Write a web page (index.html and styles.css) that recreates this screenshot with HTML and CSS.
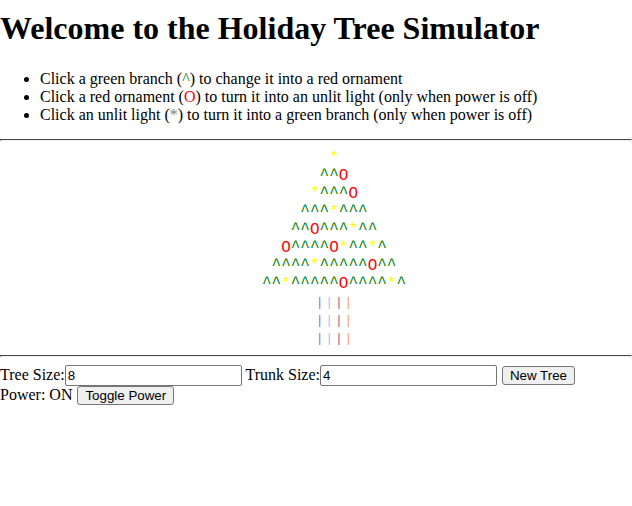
FILE: index.html
```html
<!DOCTYPE html>
<html>
<head>
<meta charset="utf-8">
<title>Holiday Tree Simulator</title>
<link rel="stylesheet" href="styles.css">
</head>
<body>
<h1 class="title">Welcome to the Holiday Tree Simulator</h1>
<ul class="rules">
  <li>Click a green branch (<span class="c-branch">^</span>) to change it into a red ornament</li>
  <li>Click a red ornament (<span class="c-orn">O</span>) to turn it into an unlit light (only when power is off)</li>
  <li>Click an unlit light (<span class="c-unlit">*</span>) to turn it into a green branch (only when power is off)</li>
</ul>
<hr class="rule">
<div class="tree">
  <div class="row"><span class="lt">*</span></div>
  <div class="row"><span class="br">^</span><span class="br">^</span><span class="or">O</span></div>
  <div class="row"><span class="lt">*</span><span class="br">^</span><span class="br">^</span><span class="br">^</span><span class="or">O</span></div>
  <div class="row"><span class="br">^</span><span class="br">^</span><span class="br">^</span><span class="lt">*</span><span class="br">^</span><span class="br">^</span><span class="br">^</span></div>
  <div class="row"><span class="br">^</span><span class="br">^</span><span class="or">O</span><span class="br">^</span><span class="br">^</span><span class="br">^</span><span class="lt">*</span><span class="br">^</span><span class="br">^</span></div>
  <div class="row"><span class="or">O</span><span class="br">^</span><span class="br">^</span><span class="br">^</span><span class="br">^</span><span class="or">O</span><span class="lt">*</span><span class="br">^</span><span class="br">^</span><span class="lt">*</span><span class="br">^</span></div>
  <div class="row"><span class="br">^</span><span class="br">^</span><span class="br">^</span><span class="br">^</span><span class="lt">*</span><span class="br">^</span><span class="br">^</span><span class="br">^</span><span class="br">^</span><span class="br">^</span><span class="or">O</span><span class="br">^</span><span class="br">^</span></div>
  <div class="row"><span class="br">^</span><span class="br">^</span><span class="lt">*</span><span class="br">^</span><span class="br">^</span><span class="br">^</span><span class="br">^</span><span class="br">^</span><span class="or">O</span><span class="br">^</span><span class="br">^</span><span class="br">^</span><span class="br">^</span><span class="lt">*</span><span class="br">^</span></div>
  <div class="row"><span class="tk t1">|</span><span class="tk t2">|</span><span class="tk t3">|</span><span class="tk t4">|</span></div>
  <div class="row"><span class="tk t1">|</span><span class="tk t2">|</span><span class="tk t3">|</span><span class="tk t4">|</span></div>
  <div class="row"><span class="tk t1">|</span><span class="tk t2">|</span><span class="tk t3">|</span><span class="tk t4">|</span></div>
</div>
<hr class="rule">
<div class="controls">Tree Size:<input class="field" type="text" value="8"> Trunk Size:<input class="field" type="text" value="4"> <button class="btn">New Tree</button></div>
<div class="controls">Power: ON <button class="btn">Toggle Power</button></div>
</body>
</html>
```

FILE: styles.css
```css
html, body {
  margin: 0;
  padding: 0;
  background: #fff;
}
body {
  font-family: "Liberation Serif", "Times New Roman", serif;
  font-size: 16px;
  color: #000;
}
.title {
  font-size: 32px;
  font-weight: bold;
  margin: 10px 0 23px;
}
.rules {
  margin: 16px 0 15px;
  padding-left: 40px;
}
.c-branch { color: green; }
.c-orn { color: red; }
.c-unlit { color: gray; }
.rule {
  margin: 8px 0;
  border: 1px inset #c0c0c0;
  border-color: #9a9a9a #eee #eee #9a9a9a;
  height: 0;
}
.tree {
  font-family: "Liberation Mono", "Courier New", monospace;
  font-size: 16px;
  text-align: center;
  padding-left: 36px;
}
.row { white-space: pre; }
.br { color: green; }
.or { color: red; }
.lt { color: #ffff00; }
.tk {
  display: inline-block;
  width: 9.6px;
  font-size: 13px;
  text-align: center;
}
.t1 { color: #9c6ad8; }
.t2 { color: #9fc4fa; }
.t3 { color: #9a5f8e; }
.t4 { color: #f6a552; }
.field {
  font-family: "Liberation Sans", Arial, sans-serif;
  font-size: 13.333px;
  width: 177px;
  height: 21px;
  box-sizing: border-box;
  padding: 1px 2px;
  border: 1px solid #767676;
  border-radius: 2px;
  margin: 0;
  vertical-align: baseline;
}
.btn {
  font-family: "Liberation Sans", Arial, sans-serif;
  font-size: 13.333px;
  padding: 1px 7px;
  border: 1px solid #767676;
  border-radius: 3px;
  background: #efefef;
  margin: 0 0 0 1px;
  color: #000;
}
```
